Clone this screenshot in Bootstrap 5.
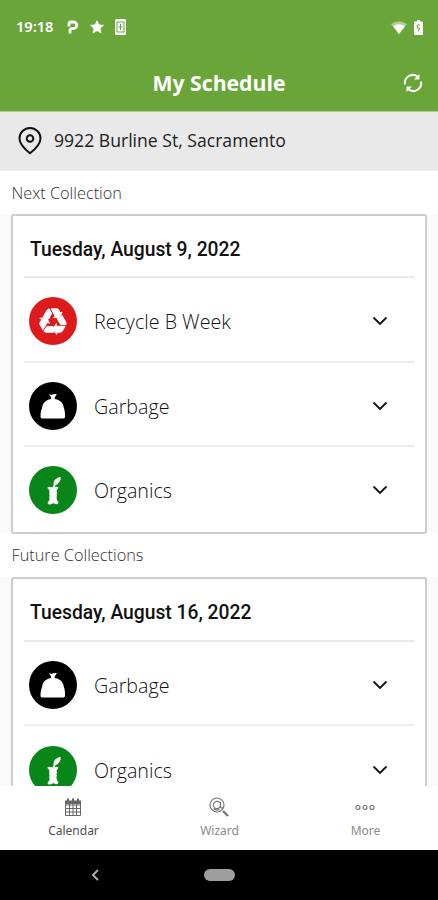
<!DOCTYPE html>
<html lang="en">
<head>
<meta charset="utf-8">
<meta name="viewport" content="width=device-width, initial-scale=1">
<title>My Schedule</title>
<link href="https://cdn.jsdelivr.net/npm/bootstrap@5.3.0/dist/css/bootstrap.min.css" rel="stylesheet">
<style>
  body { font-family: "Open Sans", "Noto Sans", sans-serif; background: #fff; color: #222; }
  svg { display: block; flex-shrink: 0; }
  .app-top { height: 112px; background: #6aa539; border-bottom: 1px solid #b4c7a2; }
  .status-line { height: 54px; padding: 0 15px 0 16px; }
  .status-icons { gap: 11px; }
  .power-icons { gap: 7px; }
  .clock { font: 600 14.6px/1 "Noto Sans", sans-serif; width: 40px; padding-bottom: 1px; }
  .title-line { height: 57px; display: grid; grid-template-columns: 1fr auto 1fr; padding-right: 15px; padding-left: 15px; }
  .page-title { font-size: 21.2px; font-weight: 700; line-height: 1; }
  .place { height: 59px; background: #e9e9e9; padding: 0 18px 2px; }
  .place-text { font-size: 17.6px; line-height: 1; color: #222; margin-left: 12px; }
  .section-label { height: 43px; padding: 1px 11.5px 0; font-size: 16.3px; font-weight: 300; color: #333; }
  .gutter { background: #fafafa; padding: 0 11px; }
  .day { border: 2px solid #ccc; border-radius: 3px; padding: 0 10px 0 11px; }
  .day-head { height: 62px; border-bottom: 2px solid #e9e9e9; padding: 7px 6px 0; font: 500 19.3px/1 Roboto, sans-serif; color: #111; }
  .later .day-head { height: 63px; }
  .pickup { height: 84.5px; border-bottom: 2px solid #ededed; padding: 4px 27px 0 5px; }
  .pickup:last-child { border-bottom: 0; padding-top: 2px; }
  .later .pickup:last-child { padding-top: 3px; }
  .pickup-name { font-size: 19.7px; font-weight: 300; color: #111; margin-left: 17px; padding-top: 2px; line-height: 1; }
  .tabs { height: 64px; background: #fff; }
  .tab { width: 146px; padding-top: 11px; font: 400 12px/1 "Noto Sans", sans-serif; color: #8a8a8a; }
  .tab.current { color: #505050; }
  .tab-text { margin-top: 8px; padding-left: 1px; }
  .sysbar { height: 50px; background: #000; padding-left: 91px; gap: 105px; }
</style>
</head>
<body>
<svg width="0" height="0" class="position-absolute" aria-hidden="true">
  <defs>
    <g id="arm" fill="#fff" stroke="#fff" stroke-width="1">
      <path d="M-9.600-5-6-11.200Q-5.200-12.600-3.800-12.600L-1.400-8-4.300-2.600Z"/>
      <path d="M-1.800-12.800H3.600Q5-12.800 5.800-11.400L7.400-8.600 9-9.400 6.800-3.600 .6-4 2.200-5.200Z"/>
    </g>
    <symbol id="recycle" viewBox="0 0 48 48">
      <circle cx="24" cy="24" r="24" fill="#dd1a1c"/>
      <g transform="translate(24 24.500)"><use href="#arm"/><use href="#arm" transform="rotate(120)"/><use href="#arm" transform="rotate(240)"/></g>
    </symbol>
    <symbol id="garbage" viewBox="0 0 48 48">
      <circle cx="24" cy="24" r="24" fill="#000"/>
      <path fill="#fff" d="M20 12.200q1.800.8 3.500.3 2-.6 4.400-.3L25.800 15.300V17Q32.500 18 34.300 23.500 34.600 25.500 35.400 27.500 36.300 31 36 35.300 35.500 36.600 34 36.600H13.500Q11.700 36.600 11.500 35 11.300 31 12.500 27.500 13.300 25.500 13.500 23.500 15.500 18 22 17V15.300Z"/>
    </symbol>
    <symbol id="organics" viewBox="0 0 48 48">
      <circle cx="24" cy="24" r="24" fill="#08861a"/>
      <path fill="#fff" d="M24.600 19.500Q23.800 13.800 28.500 12 30.500 10.700 31.800 11.200 31.700 17 26.200 19.500L25.600 21.400Q27.500 20.400 29.300 21.300 29.700 22.700 27.800 24 27.300 25.500 28.300 26.600 27 28 28 29.500 27 31.500 27.900 33 27.600 34.500 29.500 36Q29.500 38.600 26.800 38.200L25 37.200Q23.500 37.200 22 38.300 18.200 39 18.600 36.500 20.300 35 20.600 33.200 19.700 31.500 20.700 29.800 19.700 28 20.500 26.300 19.800 25 20.200 23.800 18.300 22.700 18.500 21.200 20.500 20.300 23.400 21.600L24 20.500Z"/>
    </symbol>
    <symbol id="chevron" viewBox="0 0 16 10"><path d="M1.500 1.500 8 8l6.500-6.500" fill="none" stroke="#111" stroke-width="1.800"/></symbol>
  </defs>
</svg>
<div class="d-flex flex-column vh-100 overflow-hidden">
  <header class="app-top text-white flex-shrink-0">
    <div class="status-line d-flex align-items-center justify-content-between">
      <div class="status-icons d-flex align-items-center">
        <span class="clock">19:18</span>
        <svg width="12" height="14" viewBox="0 0 12 14"><path fill="none" stroke="#fff" stroke-width="2.800" d="M2 6.500V4Q2 2 4 2H6.500a3.300 3.300 0 0 1 0 6.600H5Q3 8.600 3 10.500V13.500"/></svg>
        <svg width="14" height="14" viewBox="0 0 14 14"><path fill="#fff" stroke="#fff" stroke-width=".5" d="m7 .5 2 4.200 4.600.5-3.400 3.200.9 4.700L7 10.800l-4.100 2.300.9-4.700L.4 5.200 5 4.700Z"/></svg>
        <svg width="11" height="16" viewBox="0 0 11 16"><rect width="11" height="16" rx="1.500" fill="#fff"/><path fill="none" stroke="#6aa539" d="M2 3h7v10H2ZM5.500 5v6M3.500 8h4"/></svg>
      </div>
      <div class="power-icons d-flex align-items-center">
        <svg width="16" height="13" viewBox="0 0 16 13"><path fill="#fff" opacity=".45" d="M0 3Q8-2.500 16 3L8 13Z"/><path fill="#fff" d="M2 5Q8 1.500 14 5L8 13Z"/></svg>
        <svg width="9" height="15" viewBox="0 0 9 15"><path fill="#fff" d="M3 0h3v1.500h2q1 0 1 1V14q0 1-1 1H1q-1 0-1-1V2.500q0-1 1-1h2Z"/><path d="M6 5H3.300v3h2.600L4 11.500" fill="none" stroke="#6aa539"/></svg>
      </div>
    </div>
    <div class="title-line align-items-center">
      <span></span><h1 class="page-title m-0">My Schedule</h1>
      <svg class="ms-auto" width="20" height="20" viewBox="0 0 20 20"><g fill="none" stroke="#fff" stroke-width="2"><path d="M2 11.500A8 8 0 0 1 14.500 3.500M18 8.500A8 8 0 0 1 5.500 16.500"/></g><path fill="#fff" d="M16.500 1V6.500H11ZM3.500 19V13.500H9Z"/></svg>
    </div>
  </header>
  <div class="place d-flex align-items-center flex-shrink-0">
    <svg width="24" height="28" viewBox="0 0 24 28"><path d="M12 26.300Q1.500 18 1.500 11.500a10.500 10.500 0 0 1 21 0Q22.500 18 12 26.300Z" fill="none" stroke="#111" stroke-width="2"/><circle cx="12" cy="11.500" r="3.300" fill="none" stroke="#111" stroke-width="2"/></svg>
    <span class="place-text">9922 Burline St, Sacramento</span>
  </div>
  <main class="flex-grow-1 overflow-hidden">
    <div class="section-label d-flex align-items-center">Next Collection</div>
    <div class="gutter"><section class="day bg-white">
      <div class="day-head d-flex align-items-center">Tuesday, August 9, 2022</div>
      <div class="pickup d-flex align-items-center"><svg width="48" height="48"><use href="#recycle"/></svg><span class="pickup-name">Recycle B Week</span><svg class="ms-auto" width="16" height="10"><use href="#chevron"/></svg></div>
      <div class="pickup d-flex align-items-center"><svg width="48" height="48"><use href="#garbage"/></svg><span class="pickup-name">Garbage</span><svg class="ms-auto" width="16" height="10"><use href="#chevron"/></svg></div>
      <div class="pickup d-flex align-items-center"><svg width="48" height="48"><use href="#organics"/></svg><span class="pickup-name">Organics</span><svg class="ms-auto" width="16" height="10"><use href="#chevron"/></svg></div>
    </section></div>
    <div class="section-label d-flex align-items-center">Future Collections</div>
    <div class="gutter later"><section class="day bg-white">
      <div class="day-head d-flex align-items-center">Tuesday, August 16, 2022</div>
      <div class="pickup d-flex align-items-center"><svg width="48" height="48"><use href="#garbage"/></svg><span class="pickup-name">Garbage</span><svg class="ms-auto" width="16" height="10"><use href="#chevron"/></svg></div>
      <div class="pickup d-flex align-items-center"><svg width="48" height="48"><use href="#organics"/></svg><span class="pickup-name">Organics</span><svg class="ms-auto" width="16" height="10"><use href="#chevron"/></svg></div>
    </section></div>
  </main>
  <nav class="tabs d-flex flex-shrink-0">
    <div class="tab current d-flex flex-column align-items-center">
      <svg width="18" height="20" viewBox="0 0 18 20"><path fill="none" stroke="#666" d="M1.500 4.500h15v14h-15ZM1.500 8h15M1.500 11.500h15M1.500 15h15M5.500 7v11M9 7v11M12.500 7v11"/><path fill="#666" d="M1 3.500h16V7H1ZM3 1.500h2v4H3ZM8 1.500h2v4H8ZM13 1.500h2v4h-2Z"/></svg>
      <span class="tab-text">Calendar</span></div>
    <div class="tab d-flex flex-column align-items-center">
      <svg width="20" height="20" viewBox="0 0 20 20"><g fill="none" stroke="#777" stroke-width="1.200"><circle cx="8" cy="8" r="7"/><circle cx="8" cy="8" r="3.600"/><path d="M11.500 5v5.500q2 1.500 3-.5M4.500 11.500q3 2.500 6 1"/><path stroke-width="2.400" d="m14 14 5 5"/></g></svg>
      <span class="tab-text">Wizard</span></div>
    <div class="tab d-flex flex-column align-items-center">
      <svg width="20" height="20" viewBox="0 0 20 20"><g fill="none" stroke="#777" stroke-width="1.200"><circle cx="3" cy="10.500" r="2"/><circle cx="10" cy="10.500" r="2"/><circle cx="17" cy="10.500" r="2"/></g></svg>
      <span class="tab-text">More</span></div>
  </nav>
  <footer class="sysbar flex-shrink-0 d-flex align-items-center">
    <svg width="8" height="12" viewBox="0 0 8 12"><path d="M7 1 2 6l5 5" fill="none" stroke="#aaa" stroke-width="2"/></svg>
    <svg width="31" height="12"><rect width="31" height="12" rx="6" fill="#9e9e9e"/></svg>
  </footer>
</div>
<script src="https://cdn.jsdelivr.net/npm/bootstrap@5.3.0/dist/js/bootstrap.bundle.min.js"></script>
</body>
</html>
